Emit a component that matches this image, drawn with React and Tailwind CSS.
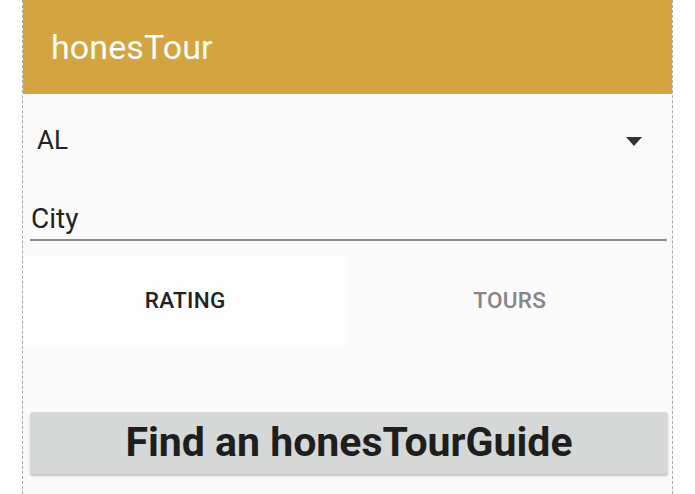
import { useState } from 'react'

export default function App() {
  const [tab, setTab] = useState('rating')
  const [city, setCity] = useState('')

  return (
    <div className="min-h-screen bg-white px-[22px] font-['Roboto',sans-serif]">
      <div className="min-h-screen border-x border-dashed border-[#a8a8a8] bg-[#fafafa]">
        {/* Toolbar */}
        <div className="h-[94px] bg-[#d4a441] flex items-center pl-[28px] pr-4">
          <h1 className="text-[34px] text-white tracking-[0.1px]">honesTour</h1>
        </div>

        {/* State spinner */}
        <div className="h-[90px] flex items-center pl-[14px] pr-[30px] pt-[2px]">
          <span className="flex-1 text-[26px] text-[#222]">AL</span>
          <svg width="16" height="9" viewBox="0 0 16 9" className="mt-[2px]">
            <path d="M0 0 L16 0 L8 9 Z" fill="#333" />
          </svg>
        </div>

        {/* City input */}
        <div className="pl-[7px] pr-[5px]">
          <input
            value={city}
            onChange={e => setCity(e.target.value)}
            placeholder="City"
            className="w-full h-[57px] pt-[13px] bg-transparent border-b-2 border-[#8a8a8a] text-[28px] text-[#222] placeholder:text-[#222] outline-none pl-[1px]"
          />
        </div>

        {/* Tabs */}
        <div className="flex mt-[14px] h-[92px]">
          <button
            onClick={() => setTab('rating')}
            className={`flex-1 flex items-center justify-center text-[22.5px] font-medium tracking-[0.3px] ${tab === 'rating' ? 'bg-[#fdfdfd] text-[#222]' : 'bg-[#fafafa] text-[#858585]'}`}
          >
            RATING
          </button>
          <button
            onClick={() => setTab('tours')}
            className={`flex-1 flex items-center justify-center text-[22.5px] font-medium tracking-[0.3px] ${tab === 'tours' ? 'bg-[#fdfdfd] text-[#222]' : 'bg-[#fafafa] text-[#858585]'}`}
          >
            TOURS
          </button>
        </div>

        {/* Search button */}
        <div className="pl-[7px] pr-[4px] pt-[65px]">
          <button className="w-full h-[62px] rounded-[3px] bg-[#d6d7d7] shadow-[0_2px_2px_rgba(0,0,0,0.22)] text-[41px] font-bold text-[#1e1e1e] flex items-center justify-center">
            Find an honesTourGuide
          </button>
        </div>
      </div>
    </div>
  )
}
